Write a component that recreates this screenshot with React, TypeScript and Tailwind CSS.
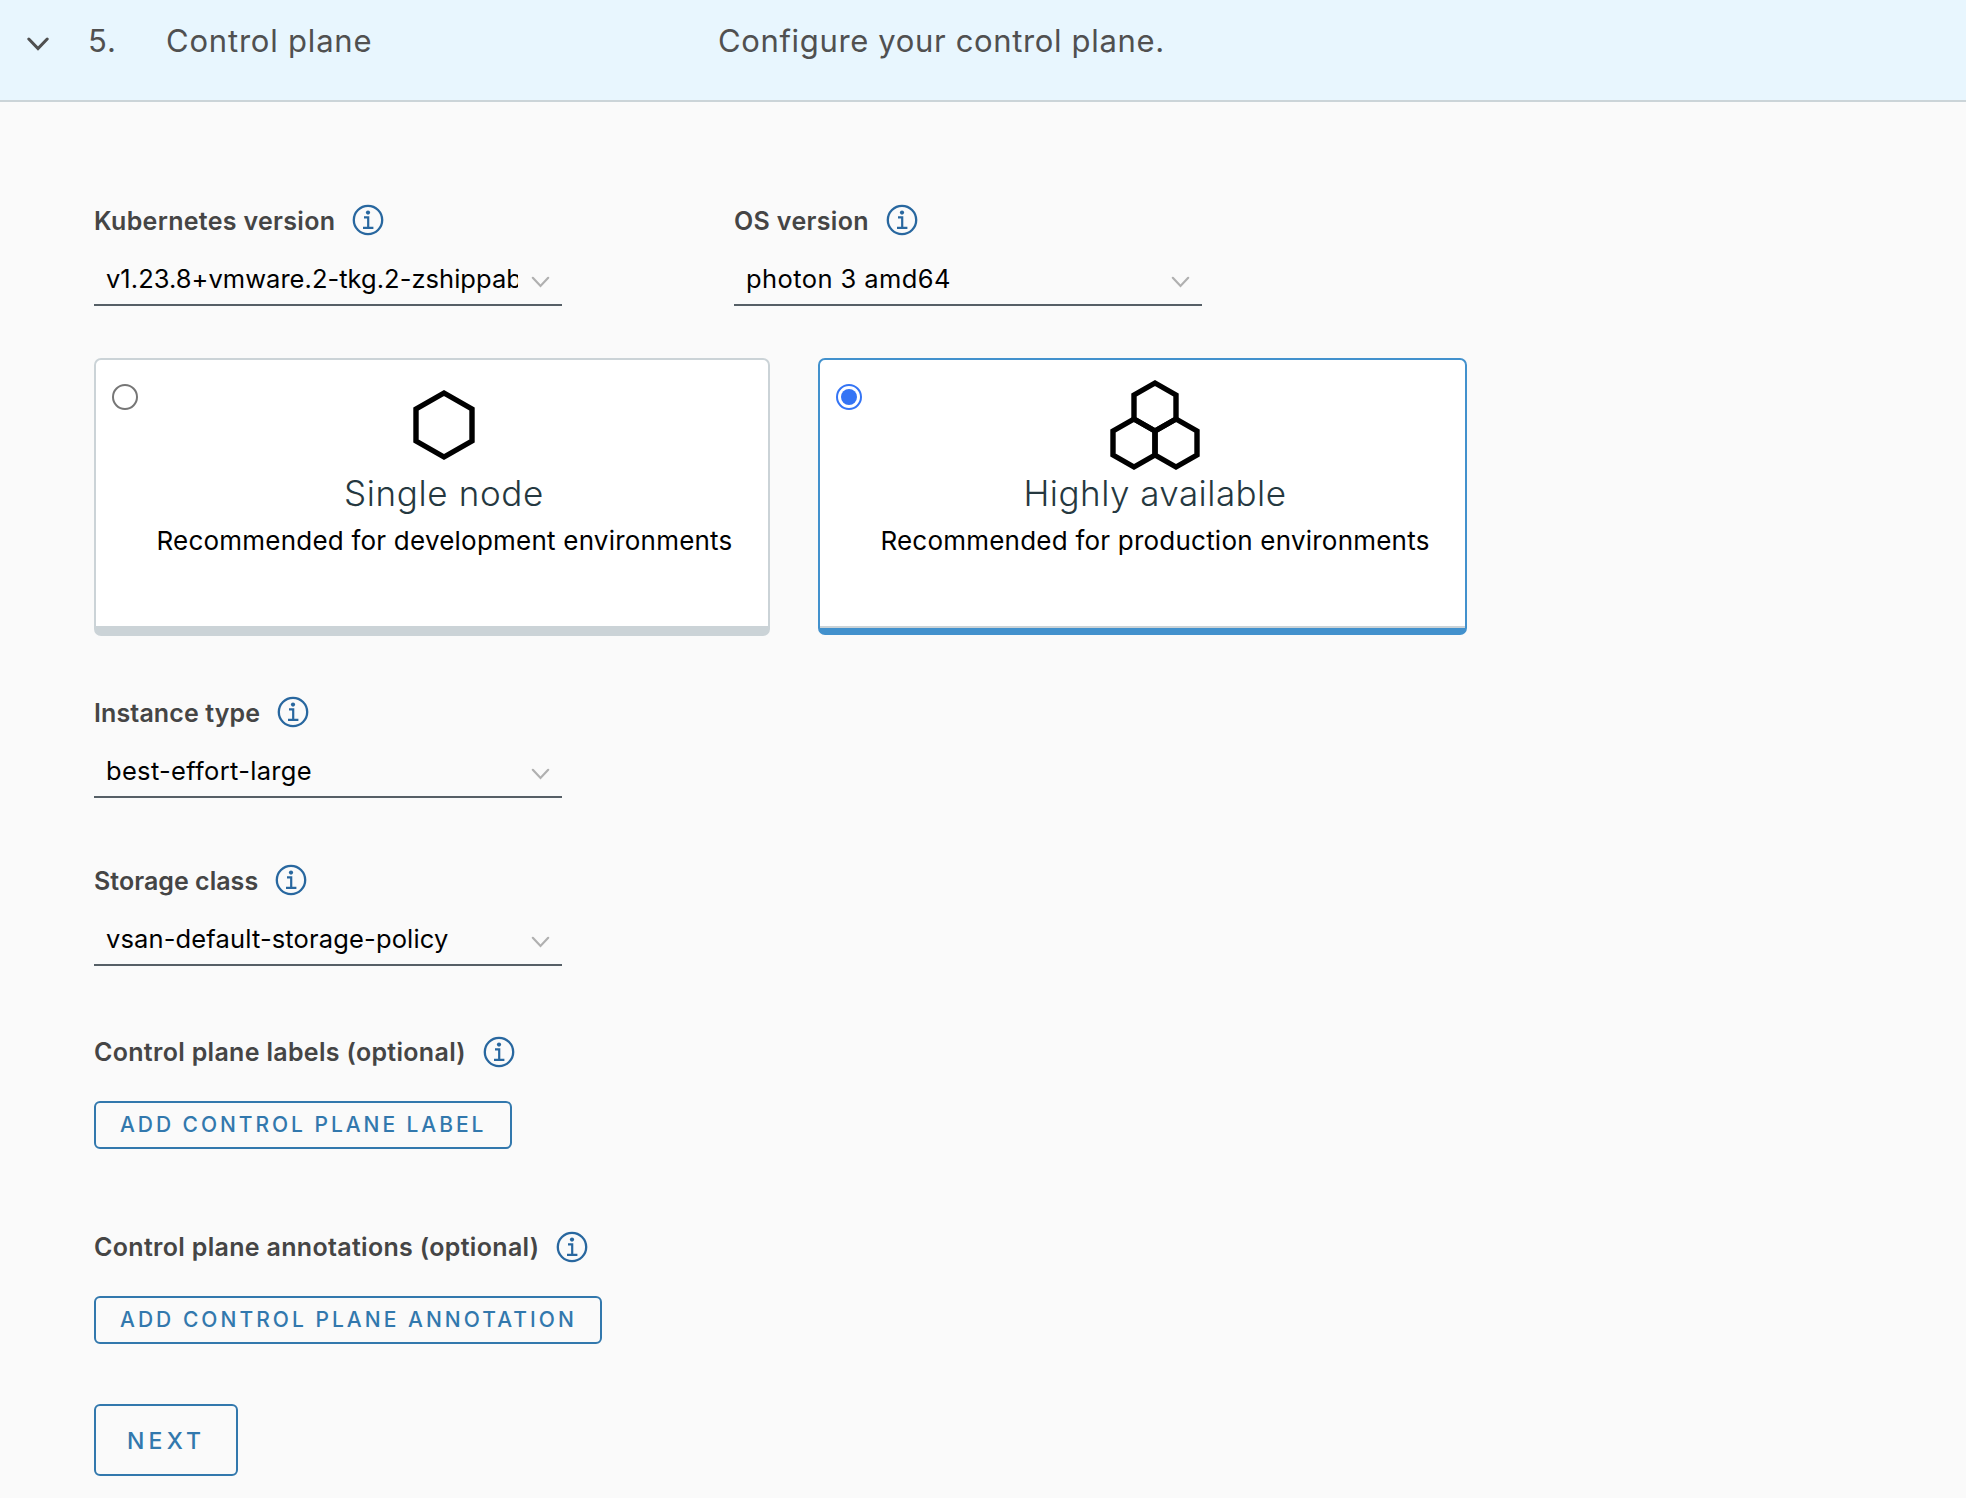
import type { ReactNode } from 'react';

function InfoIcon() {
  return (
    <svg className="ml-[17px] size-8 shrink-0" viewBox="0 0 32 32" fill="none" aria-label="More information">
      <circle cx="16" cy="16" r="14.2" stroke="#28679f" strokeWidth="2.3" />
      <circle cx="16" cy="8.6" r="2.1" fill="#28679f" />
      <path d="M12 13.3h4.2v10.4M11 23.8h10.4" stroke="#28679f" strokeWidth="2.2" />
    </svg>
  );
}

function FieldLabel({ children, className }: { children: ReactNode; className: string }) {
  return (
    <div className="flex h-8 items-center text-[25px] leading-8 font-semibold whitespace-nowrap text-[#454545]">
      <span className={className}>{children}</span>
      <InfoIcon />
    </div>
  );
}

function Select({ children, tracking }: { children: ReactNode; tracking: string }) {
  return (
    <div className="mt-5 flex h-[50px] w-[468px] items-center justify-between border-b-2 border-[#565f66] pr-[12.5px] pb-[2px] pl-3 text-[25.5px] leading-8 text-black">
      <span className={`w-[412px] overflow-hidden whitespace-nowrap ${tracking}`}>{children}</span>
      <svg className="mt-[5px] h-3 w-[19px] shrink-0" viewBox="0 0 19 12" fill="none">
        <path d="M1.8 1.8 9.5 9.9l7.7-8.1" stroke="#b0b0b0" strokeWidth="2.2" strokeLinecap="round" />
      </svg>
    </div>
  );
}

function SingleNodeIcon() {
  return (
    <svg className="h-[72px] w-[66px]" viewBox="0 0 66 72" fill="none">
      <path d="M33 4 61 20v32L33 68 5 52V20z" stroke="#000" strokeWidth="5.4" />
    </svg>
  );
}

function ClusterIcon() {
  return (
    <svg className="h-[92px] w-[92px]" viewBox="0 0 92 92" fill="none" stroke="#000" strokeWidth="5.4">
      <path d="M46 4 67 16v24L46 52 25 40V16z" />
      <path d="M25 40 46 52v24L25 88 4 76V52z" />
      <path d="M67 40 88 52v24L67 88 46 76V52z" />
    </svg>
  );
}

function SmallButton({ children, className }: { children: ReactNode; className: string }) {
  return (
    <button className={`flex h-12 items-center rounded-[6px] border-2 border-[#3278ad] pl-6 text-[21px] leading-6 font-medium whitespace-nowrap text-[#3278ad] ${className}`}>
      {children}
    </button>
  );
}

export default function App() {
  return (
    <div className="h-[1498px] w-[1966px] overflow-hidden bg-[#fafafa] font-[Inter,sans-serif]">
      <header className="flex h-[102px] border-b-2 border-[#cbd4d8] bg-[#e8f6fe] pt-[21px] text-[31px] leading-10 whitespace-nowrap text-[#505050]">
        <svg className="mt-[16px] ml-[27px] h-[15px] w-[22px]" viewBox="0 0 22 15" fill="none">
          <path d="m1.8 2 9.2 9.6L20.2 2" stroke="#505050" strokeWidth="3" strokeLinecap="round" />
        </svg>
        <span className="ml-[39px] w-[78px] tracking-[0.9px]">5.</span>
        <span className="w-[552px] tracking-[0.8px]">Control plane</span>
        <span className="tracking-[0.65px]">Configure your control plane.</span>
      </header>

      <main className="flex flex-col items-start pt-[102px] pl-[94px]">
        <div className="flex gap-[172px]">
          <div>
            <FieldLabel className="pt-0.5 tracking-[0.31px]">Kubernetes version</FieldLabel>
            <Select tracking="tracking-[0.03px]">v1.23.8+vmware.2-tkg.2-zshippable</Select>
          </div>
          <div>
            <FieldLabel className="pt-0.5 tracking-[0.35px]">OS version</FieldLabel>
            <Select tracking="tracking-[0.42px]">photon 3 amd64</Select>
          </div>
        </div>

        <div className="mt-[52px] flex h-[278px] items-start gap-12">
          <label className="flex h-[278px] w-[676px] rounded-[7px] border-2 border-b-[10px] border-[#cbd3d7] bg-white">
            <span className="mt-6 ml-4 size-[26px] shrink-0 rounded-full border-2 border-[#767676]" />
            <span className="ml-[18px] flex w-[576px] flex-col items-center whitespace-nowrap">
              <span className="mt-[29px] flex h-[72px]"><SingleNodeIcon /></span>
              <span className="mt-[9px] text-[35px] leading-[46px] font-light tracking-[0.64px] text-[#253840]">Single node</span>
              <span className="mt-[9px] pl-px text-[26px] leading-8 tracking-[0.22px] text-black">Recommended for development environments</span>
            </span>
          </label>
          <label className="flex h-[277px] w-[649px] rounded-[7px] border-2 border-b-[7px] border-[#4291cd] bg-white">
            <span className="flex h-full w-full border-b-2 border-[#cbd3d7]">
              <span className="mt-6 ml-4 flex size-[26px] shrink-0 items-center justify-center rounded-full border-2 border-[#3474f5]">
                <span className="size-4 rounded-full bg-[#3474f5]" />
              </span>
              <span className="ml-[18px] flex w-[550px] flex-col items-center whitespace-nowrap">
                <span className="mt-[19px] flex h-[92px]"><ClusterIcon /></span>
                <span className="-mt-px text-[35px] leading-[46px] font-light tracking-[0.47px] text-[#253840]">Highly available</span>
                <span className="mt-[9px] text-[26px] leading-8 tracking-[0.22px] text-black">Recommended for production environments</span>
              </span>
            </span>
          </label>
        </div>

        <div className="mt-[60px]">
          <FieldLabel className="pt-0.5 tracking-[0.12px]">Instance type</FieldLabel>
          <Select tracking="tracking-[0.32px]">best-effort-large</Select>
        </div>
        <div className="mt-[66px]">
          <FieldLabel className="pt-0.5 tracking-[0.03px]">Storage class</FieldLabel>
          <Select tracking="tracking-[0.14px]">vsan-default-storage-policy</Select>
        </div>

        <div className="mt-[70px]">
          <FieldLabel className="tracking-[0.31px]">Control plane labels (optional)</FieldLabel>
          <SmallButton className="mt-[33px] w-[418px] tracking-[2.95px]">ADD CONTROL PLANE LABEL</SmallButton>
        </div>
        <div className="mt-[82px]">
          <FieldLabel className="tracking-[0.32px]">Control plane annotations (optional)</FieldLabel>
          <SmallButton className="mt-[33px] w-[508px] tracking-[3.03px]">ADD CONTROL PLANE ANNOTATION</SmallButton>
        </div>

        <button className="mt-[60px] flex h-[72px] w-[144px] items-center rounded-[6px] border-2 border-[#3278ad] pt-0.5 pl-[31px] text-[23px] leading-7 font-medium tracking-[4.2px] text-[#3278ad]">
          NEXT
        </button>
      </main>
    </div>
  );
}
